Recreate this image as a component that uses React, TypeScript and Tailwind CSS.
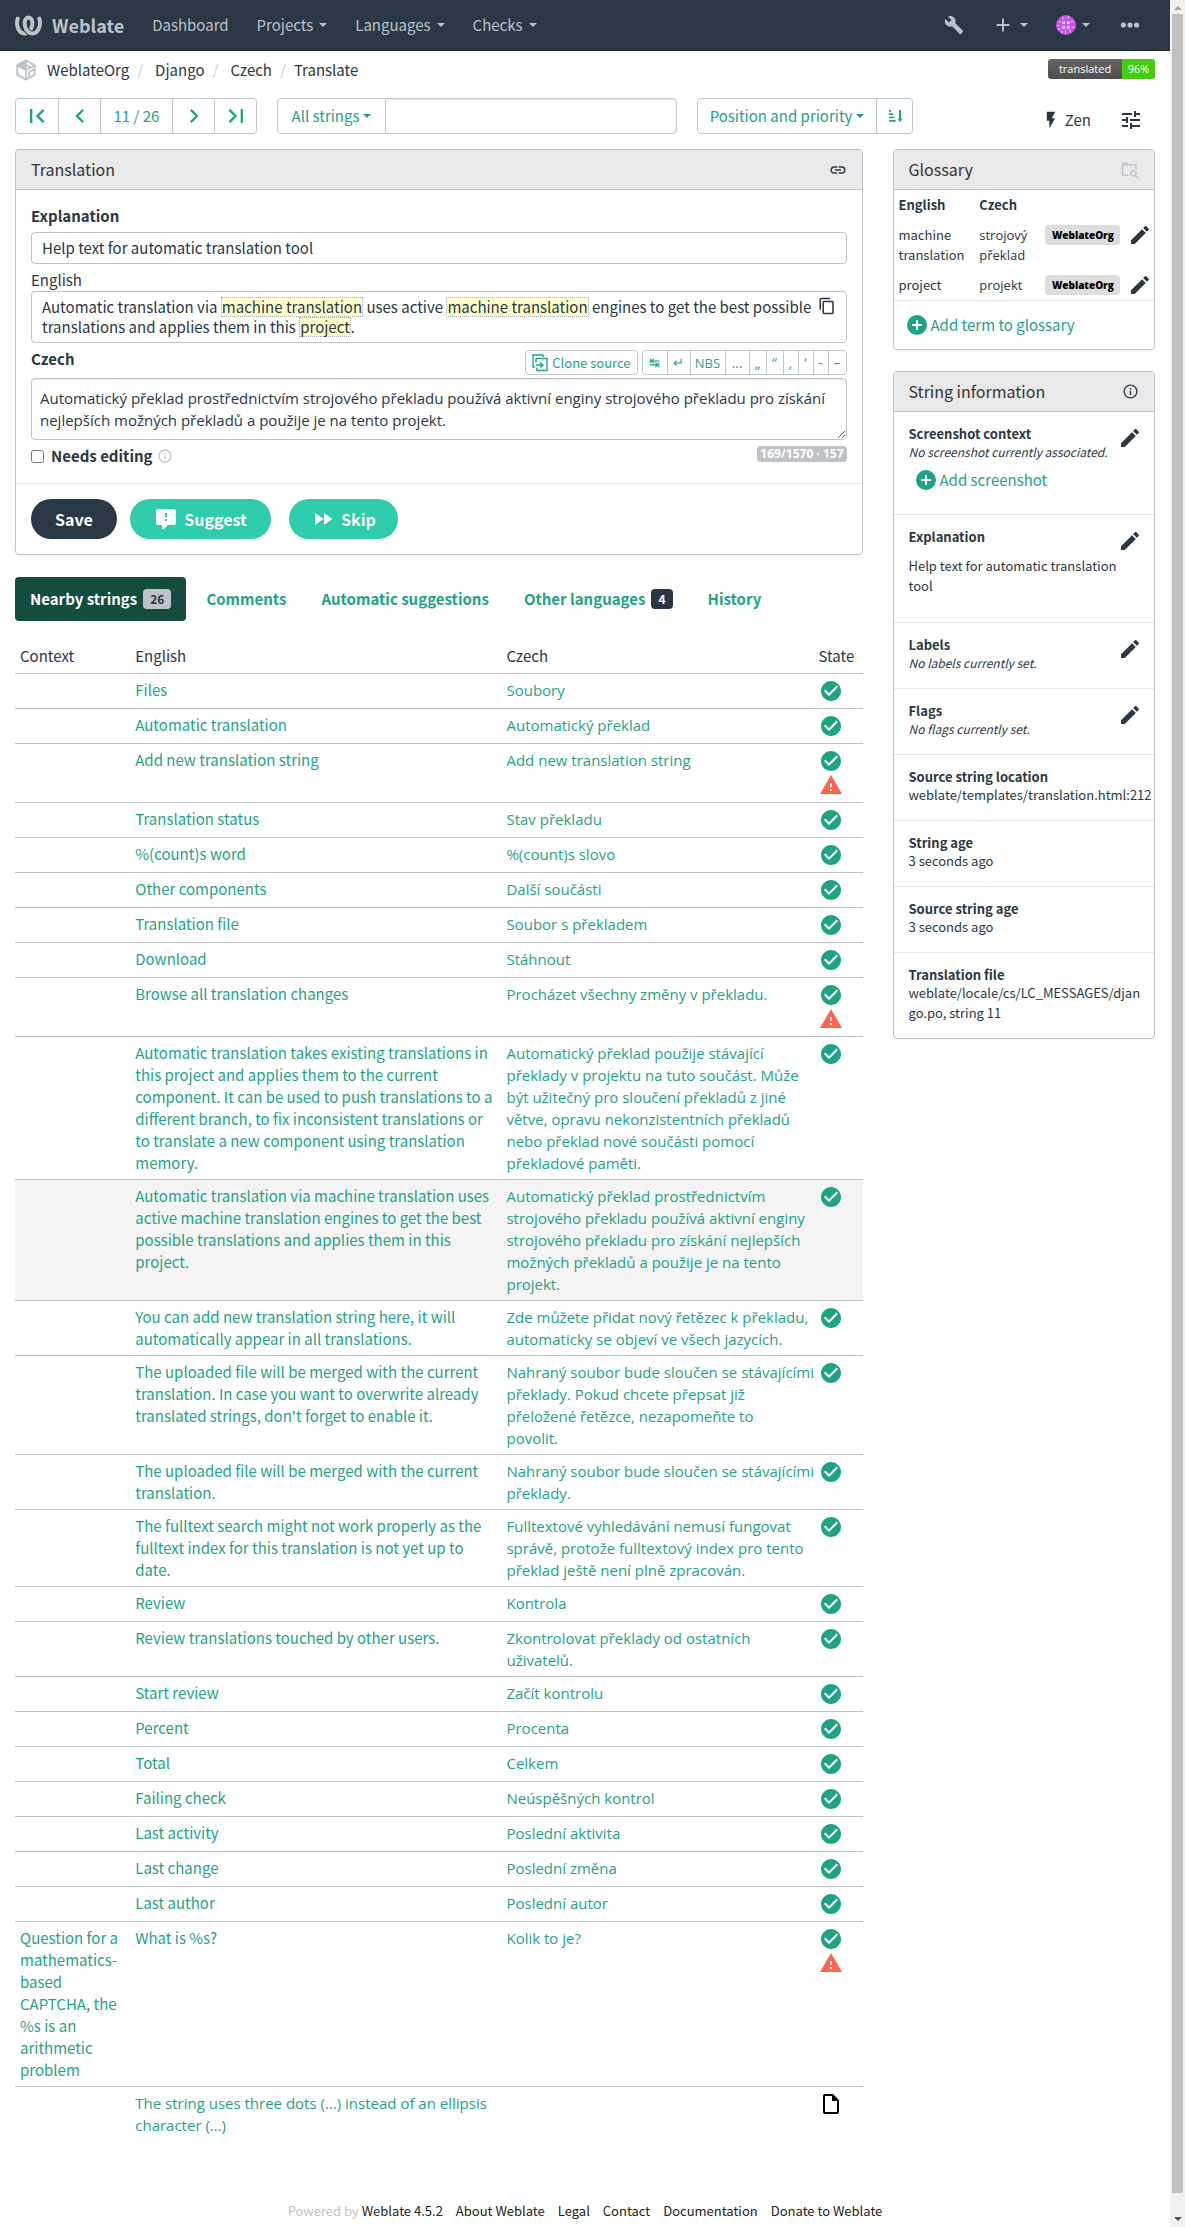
import type { ReactNode } from "react";
import { SiWeblate } from "react-icons/si";

const P = {
  first: "M18.41,16.59L13.82,12L18.41,7.41L17,6L11,12L17,18L18.41,16.59M6,6H8V18H6V6Z",
  prev: "M15.41,16.58L10.83,12L15.41,7.41L14,6L8,12L14,18L15.41,16.58Z",
  next: "M8.59,16.58L13.17,12L8.59,7.41L10,6L16,12L10,18L8.59,16.58Z",
  last: "M5.59,7.41L10.18,12L5.59,16.59L7,18L13,12L7,6L5.59,7.41M16,6H18V18H16V6Z",
  wrench:
    "M22.7,19L13.6,9.9C14.5,7.6 14,4.9 12.1,3C10.1,1 7.1,0.6 4.7,1.7L9,6L6,9L1.6,4.7C0.4,7.1 0.9,10.1 2.9,12.1C4.8,14 7.5,14.5 9.8,13.6L18.9,22.7C19.3,23.1 19.9,23.1 20.3,22.7L22.6,20.4C23.1,20 23.1,19.3 22.7,19Z",
  plus: "M19,13H13V19H11V13H5V11H11V5H13V11H19V13Z",
  dots: "M16,12a2.6,2.6 0 0,1 5.2,0a2.6,2.6 0 0,1 -5.2,0M9.4,12a2.6,2.6 0 0,1 5.2,0a2.6,2.6 0 0,1 -5.2,0M2.8,12a2.6,2.6 0 0,1 5.2,0a2.6,2.6 0 0,1 -5.2,0",
  flash: "M7,2V13H10V22L17,10H13L17,2H7Z",
  tune: "M3,17V19H9V17H3M3,5V7H13V5H3M13,21V19H21V17H13V15H11V21H13M7,9V11H3V13H7V15H9V9H7M21,13V11H11V13H21M15,9H17V7H21V5H17V3H15V9Z",
  link: "M3.9,12C3.9,10.29 5.29,8.9 7,8.9H11V7H7A5,5 0 0,0 2,12A5,5 0 0,0 7,17H11V15.1H7C5.29,15.1 3.9,13.71 3.9,12M8,13H16V11H8V13M17,7H13V8.9H17C18.71,8.9 20.1,10.29 20.1,12C20.1,13.71 18.71,15.1 17,15.1H13V17H17A5,5 0 0,0 22,12A5,5 0 0,0 17,7Z",
  copy: "M19,21H8V7H19M19,5H8A2,2 0 0,0 6,7V21A2,2 0 0,0 8,23H19A2,2 0 0,0 21,21V7A2,2 0 0,0 19,5M16,1H4A2,2 0 0,0 2,3V17H4V3H16V1Z",
  pencil:
    "M20.71,7.04C21.1,6.65 21.1,6 20.71,5.63L18.37,3.29C18,2.9 17.35,2.9 16.96,3.29L15.12,5.12L18.87,8.87M3,17.25V21H6.75L17.81,9.93L14.06,6.18L3,17.25Z",
  info: "M11,9H13V7H11M12,20C7.59,20 4,16.41 4,12C4,7.59 7.59,4 12,4C16.41,4 20,7.59 20,12C20,16.41 16.41,20 12,20M12,2A10,10 0 0,0 2,12A10,10 0 0,0 12,22A10,10 0 0,0 22,12A10,10 0 0,0 12,2M11,17H13V11H11V17Z",
  check:
    "M12 2C6.5 2 2 6.5 2 12S6.5 22 12 22 22 17.5 22 12 17.5 2 12 2M10 17L5 12L6.41 10.59L10 14.17L17.59 6.58L19 8L10 17Z",
  add: "M17,13H13V17H11V13H7V11H11V7H13V11H17M12,2A10,10 0 0,0 2,12A10,10 0 0,0 12,22A10,10 0 0,0 22,12A10,10 0 0,0 12,2Z",
  alert: "M13,14H11V10H13M13,18H11V16H13M1,21H23L12,2L1,21Z",
  comment:
    "M9,22A1,1 0 0,1 8,21V18H4A2,2 0 0,1 2,16V4C2,2.89 2.9,2 4,2H20A2,2 0 0,1 22,4V16A2,2 0 0,1 20,18H13.9L10.2,21.71C10,21.9 9.75,22 9.5,22V22H9M13,10V6H11V10H13M13,14V12H11V14H13Z",
  skip: "M13,6V18L21.5,12M4,18L12.5,12L4,6V18Z",
  file: "M6,2A2,2 0 0,0 4,4V20A2,2 0 0,0 6,22H18A2,2 0 0,0 20,20V8L14,2H6M6,4H13V9H18V20H6V4Z",
  folder:
    "M16.5,12C19,12 21,14 21,16.5C21,17.38 20.75,18.21 20.31,18.9L23.39,22L22,23.39L18.88,20.32C18.19,20.75 17.37,21 16.5,21C14,21 12,19 12,16.5C12,14 14,12 16.5,12M16.5,14A2.5,2.5 0 0,0 14,16.5A2.5,2.5 0 0,0 16.5,19A2.5,2.5 0 0,0 19,16.5A2.5,2.5 0 0,0 16.5,14M1,3.5A1.5,1.5 0 0,1 2.5,2H8L10,4H19A2,2 0 0,1 21,6V11H19V6H3V18H10V20H3A2,2 0 0,1 1,18Z",
  sort: "M18,3H21V16H23.5L19.5,21L15.5,16H18M3,3H6V5.5H3M3,8H9V10.5H3M3,13H11V15.5H3M3,18H13V20.5H3Z",
};

const green = "text-[#1fa385]";
const latin = "font-['Noto_Sans_CJK_SC','Open_Sans',sans-serif]";
// The CJK face misplaces combined carons, so Czech strings and typographic marks use this stack.
const czech = "font-['Open_Sans','Noto_Sans',sans-serif]";

function Icon({ d, className }: { d: string; className: string }) {
  return (
    <svg viewBox="0 0 24 24" fill="currentColor" aria-hidden="true" className={"shrink-0 " + className}>
      <path d={d} />
    </svg>
  );
}

function Caret() {
  return <span className="inline-block border-x-4 border-t-4 border-x-transparent border-t-current" />;
}

function NavItem({ label, caret = true }: { label: string; caret?: boolean }) {
  return (
    <a href="#" className="flex items-center gap-1.5 px-[14px] py-3 leading-6">
      {label}
      {caret && <Caret />}
    </a>
  );
}

const avatarMarks = [
  [7, 2, 1, 3], [13, 1, 1, 3], [3, 7, 3, 1], [16, 7, 3, 1], [1, 11, 3, 1], [17, 13, 4, 1], [2, 15, 3, 1],
  [7, 7, 3, 3], [12, 7, 3, 3], [7, 12, 3, 3], [12, 12, 3, 3], [6, 17, 1, 3], [10, 17, 1, 4], [15, 16, 1, 3],
];

function Avatar() {
  return (
    <svg viewBox="0 0 22 22" className="size-5 rounded-full" aria-hidden="true">
      <rect width="22" height="22" fill="#c252e1" />
      {avatarMarks.map(([x, y, w, h]) =>
        w === 3 && h === 3 ? (
          <rect key={`${x}-${y}`} x={x + 0.5} y={y + 0.5} width="2" height="2" fill="none" stroke="#f3dcf9" />
        ) : (
          <rect key={`${x}-${y}`} x={x} y={y} width={w} height={h} fill="#efcff8" />
        ),
      )}
    </svg>
  );
}

function ProjectIcon() {
  return (
    <svg viewBox="0 0 24 24" className="size-[22px]" fill="none" stroke="#bfc3c7" strokeWidth="2" strokeLinejoin="round" aria-hidden="true">
      <path d="M12 1.500 21.500 7v10L12 22.500 2.500 17V7z" />
      <path d="M12 22.500V12l9.500-5M12 12 2.500 7" />
      <path d="M12 1.500 2.500 7l9.500 5V7z" fill="#bfc3c7" />
      <path d="m15.500 14 6-3M15.500 14v5" />
      <path d="m8 4.500 9 4.700" />
    </svg>
  );
}

function Crumbs() {
  return (
    <nav aria-label="Breadcrumb" className="flex items-center gap-2 leading-[22px]">
      <span className="mr-0.5"><ProjectIcon /></span>
      {["WeblateOrg", "Django", "Czech", "Translate"].map((c, i) => (
        <span key={c} className={i < 3 ? "flex gap-3" : "flex gap-2"}>
          {i > 0 && <span className="text-[#c8cbce]">/</span>}
          <a href="#">{c}</a>
        </span>
      ))}
    </nav>
  );
}

function Toolbar() {
  const cell = "flex w-[42px] items-center justify-center border-l border-[#c4c7c9] first:border-l-0";
  return (
    <div className={"flex items-stretch " + green}>
      <div className="flex h-9 rounded border border-[#c4c7c9]">
        <button aria-label="First" className={cell}><Icon d={P.first} className="size-7" /></button>
        <button aria-label="Previous" className={cell}><Icon d={P.prev} className="size-7" /></button>
        <button className="w-[72px] border-l border-[#c4c7c9]">11 / 26</button>
        <button aria-label="Next" className={cell}><Icon d={P.next} className="size-7" /></button>
        <button aria-label="Last" className={cell}><Icon d={P.last} className="size-7" /></button>
      </div>
      <div className="ml-5 flex h-9 w-[400px] rounded border border-[#c4c7c9]">
        <button className="flex w-[108px] shrink-0 items-center justify-center gap-1 border-r border-[#c4c7c9]">All strings <Caret /></button>
        <input aria-label="Search" className="min-w-0 flex-1 rounded-r shadow-[inset_0_1px_1px_rgba(0,0,0,0.1)]" />
      </div>
      <div className="ml-5 flex h-9 rounded border border-[#c4c7c9]">
        <button className="flex w-[178px] items-center justify-center gap-1 whitespace-nowrap">Position and priority <Caret /></button>
        <button aria-label="Sort direction" className="flex w-9 items-center justify-center border-l border-[#c4c7c9]"><Icon d={P.sort} className="size-4" /></button>
      </div>
      <div className="ml-auto flex items-center gap-7 pt-2 text-[#2a3744]">
        <a href="#" className="flex items-center gap-1"><Icon d={P.flash} className="size-5" />Zen</a>
        <button aria-label="Settings" className="pr-3"><Icon d={P.tune} className="size-6" /></button>
      </div>
    </div>
  );
}

function Mark({ children }: { children: ReactNode }) {
  return (
    <mark className="inline-block border border-dotted border-[#a9b0ae] bg-[#ffffcc] align-bottom leading-[18px] text-inherit">{children}</mark>
  );
}

function PanelHeader({ title, children }: { title: string; children: ReactNode }) {
  return (
    <div className="flex h-10 items-center justify-between rounded-t border-b border-[#bfc3c7] bg-[#e9e9eb] px-[15px]">
      <h2 className="pb-0.5 text-[16px] text-[#333]">{title}</h2>
      {children}
    </div>
  );
}

const chars: [string, string][] = [
  ["NBS", "w-[35px] text-[13px]"],
  ["…", "w-6"],
  ["„", "w-[17px]"],
  ["“", "w-[17px]"],
  ["‚", "w-[15px]"],
  ["‘", "w-[15px]"],
  ["-", "w-[15px]"],
  ["–", "w-[18px]"],
];

function TranslationPanel() {
  return (
    <section className="rounded border border-[#bfc3c7] shadow-xs">
      <PanelHeader title="Translation">
        <a href="#" aria-label="Permalink"><Icon d={P.link} className="size-[18px]" /></a>
      </PanelHeader>
      <div className="px-[15px] pt-[15px] pb-[17px]">
        <div className="leading-[22px] font-bold">Explanation</div>
        <div className="mt-[5px] rounded border border-[#bfc3c7] px-[10px] py-1 leading-[22px]">Help text for automatic translation tool</div>
        <div className="mt-[5px] leading-[22px]">English</div>
        <div className="flex justify-between rounded border border-[#bfc3c7] px-[10px] py-[5px] leading-5">
          <p>
            Automatic translation via <Mark>machine translation</Mark> uses active <Mark>machine translation</Mark> engines to get the best possible translations and applies them in this <Mark>project</Mark>.
          </p>
          <button aria-label="Copy" className="self-start"><Icon d={P.copy} className="size-[18px]" /></button>
        </div>
        <div className="mt-[7px] flex justify-between">
          <label htmlFor="translation" className="leading-[18px] font-bold">Czech</label>
          <div className={"flex text-[14px] " + green}>
            <button className="mr-1 flex h-[25px] items-center gap-1 rounded-sm border border-[#c4c7c9] px-1.5 text-[13px]">
              <svg viewBox="0 0 16 18" className="h-[18px] w-4" fill="none" stroke="currentColor" strokeWidth="1.4" aria-hidden="true">
                <path d="M11 3V1H1v12h2M4 4.5h11V16.5H5V13.5M4 4.5v4" />
                <path d="M4 11h6M8 8.500l3 2.500-3 2.500" />
              </svg>
              Clone source
            </button>
            <div className={"flex h-[25px] rounded-sm border border-[#c4c7c9] " + czech}>
              <button className="w-6 text-[13px]">↹</button>
              <button className="w-[23px] border-l border-[#c4c7c9] text-[13px]">↵</button>
              {chars.map(([c, w]) => (
                <button key={c} className={"border-l border-[#c4c7c9] text-center leading-[22px] " + w}>{c}</button>
              ))}
            </div>
          </div>
        </div>
        <textarea
          id="translation"
          rows={2}
          className={"mt-[3px] block h-[62px] w-full rounded border border-[#bfc3c7] px-2 py-2 text-[15px] leading-[22px] shadow-[inset_0_1px_1px_rgba(0,0,0,0.1)] " + czech}
          defaultValue="Automatický překlad prostřednictvím strojového překladu používá aktivní enginy strojového překladu pro získání nejlepších možných překladů a použije je na tento projekt."
        />
        <div className="mt-1.5 flex items-start justify-between">
          <label className="flex items-center gap-[7px] leading-[20px] font-bold">
            <input type="checkbox" className="size-[13px]" />
            <span className="flex items-center gap-1">Needs editing <Icon d={P.info} className="size-4 text-[#bfc3c7]" /></span>
          </label>
          <span className={"rounded-sm bg-[#bfc3c7] px-[3px] text-[12px] leading-4 font-bold text-white " + czech}>169/1570 · 157</span>
        </div>
      </div>
      <div className="flex items-start border-t border-[#e4e6e8] px-[15px] py-[15px] text-[16px] font-bold text-white">
        <button className="h-10 w-[86px] rounded-full bg-[#2a3744]">Save</button>
        <button className="ml-[13px] flex h-10 w-[141px] items-center justify-center gap-1.5 rounded-full bg-[#2eccaa]"><Icon d={P.comment} className="size-6" />Suggest</button>
        <button className="ml-[18px] flex h-10 w-[109px] items-center justify-center gap-1.5 rounded-full bg-[#2eccaa]"><Icon d={P.skip} className="size-6" />Skip</button>
      </div>
    </section>
  );
}

function Tabs() {
  const tab = "flex items-center gap-1.5 rounded px-[15px]";
  return (
    <div role="tablist" className={"mt-[22px] flex h-11 gap-[5px] leading-6 font-bold " + green}>
      <button role="tab" aria-selected="true" className={tab + " bg-[#144d3f] text-white"}>
        Nearby strings <span className="rounded-sm bg-[#bfc3c7] px-[7px] text-[12px] leading-5 text-[#2a3744]">26</span>
      </button>
      <button role="tab" className={tab}>Comments</button>
      <button role="tab" className={tab}>Automatic suggestions</button>
      <button role="tab" className={tab}>
        Other languages <span className="rounded-sm bg-[#2a3744] px-[7px] text-[12px] leading-5 text-white">4</span>
      </button>
      <button role="tab" className={tab}>History</button>
    </div>
  );
}

type Row = { en: string; cs: string; ctx?: string; warn?: boolean; active?: boolean; empty?: boolean };

const rows: Row[] = [
  { en: "Files", cs: "Soubory" },
  { en: "Automatic translation", cs: "Automatický překlad" },
  { en: "Add new translation string", cs: "Add new translation string", warn: true },
  { en: "Translation status", cs: "Stav překladu" },
  { en: "%(count)s word", cs: "%(count)s slovo" },
  { en: "Other components", cs: "Další součásti" },
  { en: "Translation file", cs: "Soubor s překladem" },
  { en: "Download", cs: "Stáhnout" },
  { en: "Browse all translation changes", cs: "Procházet všechny změny v překladu.", warn: true },
  {
    en: "Automatic translation takes existing translations in this project and applies them to the current component. It can be used to push translations to a different branch, to fix inconsistent translations or to translate a new component using translation memory.",
    cs: "Automatický překlad použije stávající překlady v projektu na tuto součást. Může být užitečný pro sloučení překladů z jiné větve, opravu nekonzistentních překladů nebo překlad nové součásti pomocí překladové paměti.",
  },
  {
    en: "Automatic translation via machine translation uses active machine translation engines to get the best possible translations and applies them in this project.",
    cs: "Automatický překlad prostřednictvím strojového překladu používá aktivní enginy strojového překladu pro získání nejlepších možných překladů a použije je na tento projekt.",
    active: true,
  },
  {
    en: "You can add new translation string here, it will automatically appear in all translations.",
    cs: "Zde můžete přidat nový řetězec k překladu, automaticky se objeví ve všech jazycích.",
  },
  {
    en: "The uploaded file will be merged with the current translation. In case you want to overwrite already translated strings, don't forget to enable it.",
    cs: "Nahraný soubor bude sloučen se stávajícími překlady. Pokud chcete přepsat již přeložené řetězce, nezapomeňte to\npovolit.",
  },
  {
    en: "The uploaded file will be merged with the current translation.",
    cs: "Nahraný soubor bude sloučen se stávajícími překlady.",
  },
  {
    en: "The fulltext search might not work properly as the fulltext index for this translation is not yet up to date.",
    cs: "Fulltextové vyhledávání nemusí fungovat správě, protože fulltextový index pro tento překlad ještě není plně zpracován.",
  },
  { en: "Review", cs: "Kontrola" },
  { en: "Review translations touched by other users.", cs: "Zkontrolovat překlady od ostatních uživatelů." },
  { en: "Start review", cs: "Začít kontrolu" },
  { en: "Percent", cs: "Procenta" },
  { en: "Total", cs: "Celkem" },
  { en: "Failing check", cs: "Neúspěšných kontrol" },
  { en: "Last activity", cs: "Poslední aktivita" },
  { en: "Last change", cs: "Poslední změna" },
  { en: "Last author", cs: "Poslední autor" },
  { ctx: "Question for a mathematics-based CAPTCHA, the %s is an arithmetic problem", en: "What is %s?", cs: "Kolik to je?", warn: true },
  { en: "The string uses three dots (...) instead of an ellipsis character (…)", cs: "", empty: true },
];

function StringsTable() {
  const td = "p-[5px]";
  const th = "pt-[5px] pb-1.5 font-normal ";
  return (
    <table className="mt-[19px] w-full table-fixed border-collapse text-left align-top leading-[22px]">
      <thead>
        <tr>
          <th className={th + "w-[13.6%] px-[5px]"}>Context</th>
          <th className={th + "w-[43.8%] px-[5px]"}>English</th>
          <th className={th + "w-[37.4%] px-[5px]"}>Czech</th>
          <th className={th + "w-[5.2%]"}>State</th>
        </tr>
      </thead>
      <tbody className={green}>
        {rows.map((r) => (
          <tr key={r.en} className={"border-t border-[#bfc3c7] align-top " + (r.active ? "bg-[#f4f4f4]" : "")}>
            <td className={td}>{r.ctx && <a href="#">{r.ctx}</a>}</td>
            <td className={td}><a href="#" className={r.empty ? czech : ""}>{r.en}</a></td>
            <td className={"py-[5px] pr-0.5 pl-[5px] whitespace-pre-line " + czech}>{r.cs && <a href="#">{r.cs}</a>}</td>
            <td className="py-[7px] pl-0.5">
              <div className="flex w-[22px] flex-col gap-1">
                <span className="flex h-5 items-center justify-center">
                  <Icon d={r.empty ? P.file : P.check} className={r.empty ? "size-6 text-black" : "size-6"} />
                </span>
                {r.warn && <span className="flex h-5 items-center justify-center"><Icon d={P.alert} className="size-6 text-[#fa664d]" /></span>}
              </div>
            </td>
          </tr>
        ))}
      </tbody>
    </table>
  );
}

function Pencil() {
  return <a href="#" aria-label="Edit"><Icon d={P.pencil} className="size-6" /></a>;
}

function Glossary() {
  const terms = [
    ["machine translation", "strojový překlad"],
    ["project", "projekt"],
  ];
  return (
    <section className="rounded border border-[#bfc3c7] shadow-xs">
      <PanelHeader title="Glossary">
        <a href="#" aria-label="Browse glossary"><Icon d={P.folder} className="size-[18px] text-[#bfc3c7]" /></a>
      </PanelHeader>
      <table className="w-full table-fixed text-left align-top text-[13px] leading-5">
        <thead>
          <tr className="h-[30px]">
            <th className="w-[31%] pl-[5px] font-bold">English</th>
            <th className="w-[25%] pl-[5px] font-bold">Czech</th>
            <td className="w-[34%]" />
            <td className="w-[10%]" />
          </tr>
        </thead>
        <tbody>
          {terms.map(([en, cs]) => (
            <tr key={en} className="align-top">
              <td className="p-[5px]">{en}</td>
              <td className={"py-[5px] pl-[5px] " + czech}>{cs}</td>
              <td className="py-[5px] pl-1.5">
                <span className={"block w-[75px] rounded-sm bg-[#ddd] text-center text-[10px] leading-5 font-extrabold text-black " + czech}>WeblateOrg</span>
              </td>
              <td className="pt-[3px]"><Pencil /></td>
            </tr>
          ))}
        </tbody>
      </table>
      <div className="border-t border-[#e4e6e8] px-[11px] py-3">
        <a href="#" className={"flex items-center gap-0.5 leading-6 " + green}><Icon d={P.add} className="size-6" />Add term to glossary</a>
      </div>
    </section>
  );
}

function InfoItem({ title, edit, children }: { title: string; edit?: boolean; children: ReactNode }) {
  return (
    <div className="flex border-t border-[#e4e6e8] px-[15px] pt-[14px] pb-[15px] text-[13px] first:border-t-0">
      <div className="min-w-0 flex-1">
        <h3 className="leading-4 font-bold">{title}</h3>
        <div className="leading-5">{children}</div>
      </div>
      {edit && <div className="-mr-[3px] -ml-6"><Pencil /></div>}
    </div>
  );
}

function StringInfo() {
  return (
    <section className="mt-[21px] rounded border border-[#bfc3c7] shadow-xs">
      <PanelHeader title="String information">
        <Icon d={P.info} className="size-[17px]" />
      </PanelHeader>
      <div>
        <InfoItem title="Screenshot context" edit>
          <em className="block text-[12px]">No screenshot currently associated.</em>
          <a href="#" className={"mt-1.5 mb-[7px] ml-[5px] flex items-center gap-0.5 text-[15px] leading-6 " + green}><Icon d={P.add} className="size-6" />Add screenshot</a>
        </InfoItem>
        <InfoItem title="Explanation" edit>
          <p className="my-[11px]">Help text for automatic translation tool</p>
        </InfoItem>
        <InfoItem title="Labels" edit><em className="block text-[12px]">No labels currently set.</em></InfoItem>
        <InfoItem title="Flags" edit><em className="block text-[12px]">No flags currently set.</em></InfoItem>
        <InfoItem title="Source string location"><span className="whitespace-nowrap">weblate/templates/translation.html:212</span></InfoItem>
        <InfoItem title="String age">3 seconds ago</InfoItem>
        <InfoItem title="Source string age">3 seconds ago</InfoItem>
        <InfoItem title="Translation file"><p className="-mr-2 break-all">weblate/locale/cs/LC_MESSAGES/django.po, string 11</p></InfoItem>
      </div>
    </section>
  );
}

function ScrollTrack() {
  return (
    <div aria-hidden="true" className="flex w-[15px] shrink-0 flex-col items-center justify-between bg-[#f1f1f1] py-1.5">
      <span className="border-x-4 border-b-4 border-x-transparent border-b-[#a3a3a3]" />
      <span className="mt-1 mb-6 w-[11px] flex-1 bg-[#c1c1c1]" />
      <span className="border-x-4 border-t-4 border-x-transparent border-t-[#505050]" />
    </div>
  );
}

export default function App() {
  return (
    <div className={"flex min-h-screen bg-white text-[15px] text-[#2a3744] " + latin}>
      <div className="flex min-w-0 flex-1 flex-col">
        <header className="flex h-[51px] items-center border-b border-[#18212c] bg-[#2a3744] text-[#bfc3c7]">
          <a href="#" className="flex items-center gap-2.5 pr-[14px] pl-[15px] text-[18px] font-bold">
            <SiWeblate className="size-[27px]" />
            Weblate
          </a>
          <NavItem label="Dashboard" caret={false} />
          <NavItem label="Projects" />
          <NavItem label="Languages" />
          <NavItem label="Checks" />
          <div className="ml-auto flex items-center gap-7 pr-7">
            <a href="#" aria-label="Manage"><Icon d={P.wrench} className="size-5" /></a>
            <button aria-label="Add" className="flex items-center gap-1.5"><Icon d={P.plus} className="size-[22px]" /><Caret /></button>
            <button aria-label="Account" className="flex items-center gap-1.5"><Avatar /><Caret /></button>
            <button aria-label="More"><Icon d={P.dots} className="size-6" /></button>
          </div>
        </header>
        <div className="px-[15px]">
          <div className="mt-2 flex h-6 items-start justify-between">
            <Crumbs />
            <div className="flex h-5 overflow-hidden rounded-[3px] font-['Open_Sans',sans-serif] text-[11px] leading-5 text-white">
              <span className="w-[74px] bg-linear-to-b from-[#666] to-[#4d4d4d] text-center">translated</span>
              <span className="w-[33px] bg-[#4c1] text-center">96%</span>
            </div>
          </div>
          <div className="mt-[15px]"><Toolbar /></div>
        </div>
        <div className="mt-[15px] flex">
          <main className="w-3/4 px-[15px]">
            <TranslationPanel />
            <Tabs />
            <StringsTable />
          </main>
          <aside className="w-1/4 px-[15px]">
            <Glossary />
            <StringInfo />
          </aside>
        </div>
        <footer className="mt-auto flex justify-center gap-[13px] pb-1.5 text-[13px] leading-5 text-[#222]">
          <span className="text-[#bfc3c7]">Powered by <a href="#" className="text-[#222]">Weblate 4.5.2</a></span>
          {["About Weblate", "Legal", "Contact", "Documentation", "Donate to Weblate"].map((l) => (
            <a key={l} href="#">{l}</a>
          ))}
        </footer>
      </div>
      <ScrollTrack />
    </div>
  );
}
